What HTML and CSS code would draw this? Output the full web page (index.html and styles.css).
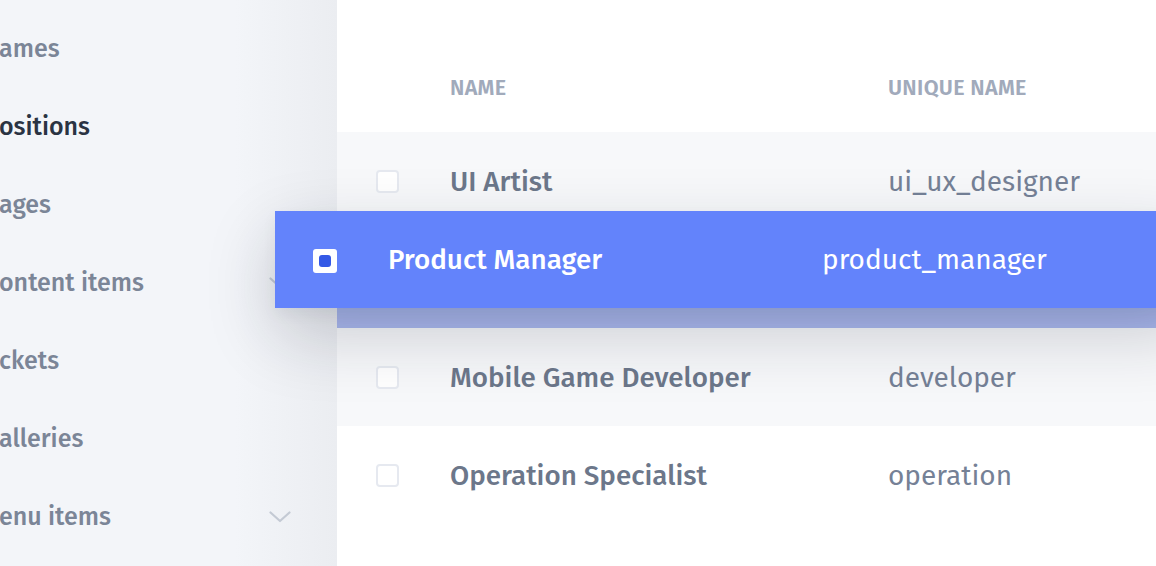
FILE: index.html
```html
<!DOCTYPE html>
<html lang="en">
<head>
<meta charset="utf-8">
<title>Positions</title>
<link rel="stylesheet" href="styles.css">
</head>
<body>
<div class="app">
  <aside class="sidebar">
    <nav class="menu">
      <a class="menu-item">ames</a>
      <a class="menu-item active">ositions</a>
      <a class="menu-item">ages</a>
      <a class="menu-item">ontent items
        <svg class="chev" viewBox="0 0 22 12" width="22" height="12"><polyline points="1.5,1.5 11,10 20.5,1.5"/></svg>
      </a>
      <a class="menu-item">ckets</a>
      <a class="menu-item">alleries</a>
      <a class="menu-item">enu items
        <svg class="chev" viewBox="0 0 22 12" width="22" height="12"><polyline points="1.5,1.5 11,10 20.5,1.5"/></svg>
      </a>
    </nav>
  </aside>

  <main class="content">
    <div class="table">
      <div class="thead">
        <div class="cell"></div>
        <div class="cell th">Name</div>
        <div class="cell th">Unique name</div>
      </div>
      <div class="trow striped">
        <div class="cell"><span class="check"></span></div>
        <div class="cell name">UI Artist</div>
        <div class="cell uname">ui_ux_designer</div>
      </div>
      <div class="trow slot"></div>
      <div class="trow striped">
        <div class="cell"><span class="check"></span></div>
        <div class="cell name">Mobile Game Developer</div>
        <div class="cell uname">developer</div>
      </div>
      <div class="trow">
        <div class="cell"><span class="check"></span></div>
        <div class="cell name">Operation Specialist</div>
        <div class="cell uname">operation</div>
      </div>
    </div>
  </main>

  <div class="drag-row">
    <div class="cell"><span class="check checked"></span></div>
    <div class="cell name">Product Manager</div>
    <div class="cell uname">product_manager</div>
  </div>
</div>
</body>
</html>
```
FILE: styles.css
```css
* { box-sizing: border-box; }

html, body {
  margin: 0;
  padding: 0;
  background: #ffffff;
}

body {
  font-family: "Fira Sans", "Lato", "Open Sans", sans-serif;
  -webkit-font-smoothing: antialiased;
}

.app {
  position: relative;
  display: flex;
  width: 1156px;
  height: 566px;
  overflow: hidden;
}

/* ---------- sidebar ---------- */
.sidebar {
  flex: 0 0 337px;
  height: 100%;
  overflow: hidden;
  background: linear-gradient(90deg, #f3f5f9 0, #f3f5f9 235px, #ebedf1 337px);
}

.menu {
  display: flex;
  flex-direction: column;
  padding-top: 10px;
  margin-left: -1px;
}

.menu-item {
  display: flex;
  align-items: center;
  justify-content: space-between;
  height: 78px;
  padding-right: 46px;
  font-size: 25px;
  font-weight: 500;
  color: #7b8597;
  white-space: nowrap;
  cursor: pointer;
}

.menu-item.active {
  color: #2a3343;
}

.chev {
  display: block;
  fill: none;
  stroke: #c4cad4;
  stroke-width: 2.2;
  stroke-linecap: round;
  stroke-linejoin: round;
}

/* ---------- table ---------- */
.content {
  flex: 1 1 auto;
  height: 100%;
  background: #ffffff;
}

.thead,
.trow,
.drag-row {
  display: grid;
  grid-template-columns: 113px 438px 1fr;
  align-items: center;
}

.thead {
  height: 132px;
  align-items: end;
  padding-bottom: 31px;
}

.th {
  font-size: 21.5px;
  line-height: 26px;
  font-weight: 600;
  letter-spacing: 0.3px;
  text-transform: uppercase;
  color: #a1aabb;
}

.trow {
  height: 98px;
}

.trow.striped {
  background: #f7f8fa;
}

.trow.slot {
  background: #aab8ee;
}

.cell {
  white-space: nowrap;
}

.cell:first-child {
  display: flex;
  padding-left: 39px;
}

.name {
  font-size: 27.8px;
  font-weight: 500;
  color: #6c778a;
}

.uname {
  font-size: 28px;
  font-weight: 400;
  color: #758196;
}

.check {
  display: block;
  width: 23px;
  height: 23px;
  border: 2px solid #e6e9f0;
  border-radius: 4px;
  background: #ffffff;
}

/* ---------- dragged row ---------- */
.drag-row {
  position: absolute;
  left: 275px;
  right: -40px;
  top: 211px;
  height: 97px;
  grid-template-columns: 113px 434px 1fr;
  background: #6383fb;
  box-shadow: 0 26px 70px rgba(25, 30, 50, 0.2), 0 6px 14px rgba(25, 30, 50, 0.05);
  z-index: 5;
}

.drag-row .cell:first-child {
  padding-left: 38px;
}

.drag-row .name,
.drag-row .uname {
  color: #ffffff;
}

.check.checked {
  position: relative;
  width: 24px;
  height: 24px;
  border: none;
  border-radius: 3px;
  background: #ffffff;
  margin-top: 3px;
}

.check.checked::after {
  content: "";
  position: absolute;
  left: 6px;
  top: 6px;
  width: 12px;
  height: 12px;
  border-radius: 3px;
  background: #3459e6;
}
```
